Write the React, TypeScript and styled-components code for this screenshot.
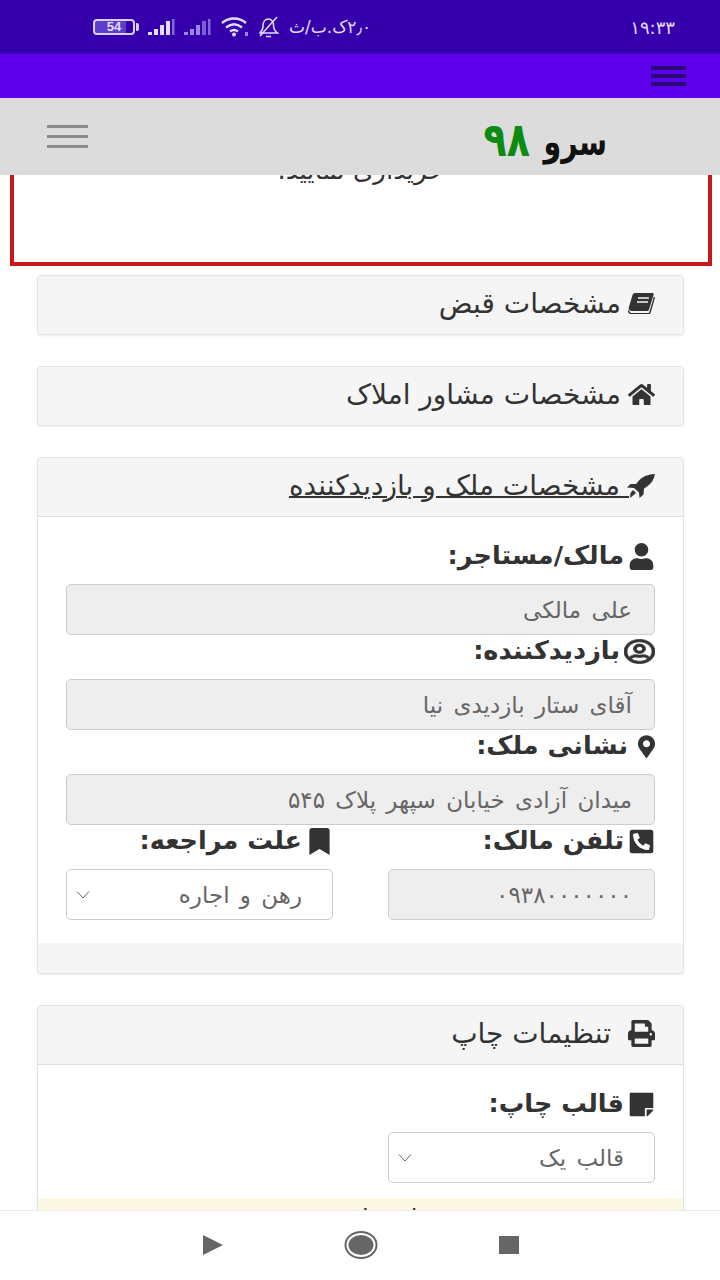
import styled, { createGlobalStyle } from "styled-components";
import {
  FaBookmark,
  FaHome,
  FaMapMarkerAlt,
  FaPhoneSquareAlt,
  FaPrint,
  FaRegUserCircle,
  FaStickyNote,
  FaUser,
} from "react-icons/fa";
import type { ReactNode } from "react";

const GlobalStyle = createGlobalStyle`
  html, body {
    margin: 0;
    padding: 0;
    background: #fff;
  }
  * {
    box-sizing: border-box;
  }
`;

const font = `"DejaVu Sans", "Noto Sans", sans-serif`;

const Screen = styled.div`
  width: 720px;
  height: 1280px;
  display: flex;
  flex-direction: column;
  overflow: hidden;
  font-family: ${font};
  color: #333;
  background: #fff;
`;

const StatusBar = styled.div`
  height: 54px;
  flex: none;
  background: #3500ac;
  color: #e4dcfa;
  display: flex;
  align-items: center;
  justify-content: space-between;
  padding: 0 45px 0 93px;
  direction: ltr;
`;

const StatusLeft = styled.div`
  display: flex;
  align-items: center;
  gap: 10px;
`;

const Signals = styled.div`
  display: flex;
  align-items: center;
  gap: 9px;
`;

const Battery = styled.div`
  width: 42px;
  height: 16px;
  margin-right: 3px;
  border: 2px solid #d9cef8;
  border-radius: 4px;
  font: bold 13px "Liberation Sans", sans-serif;
  line-height: 12px;
  text-align: center;
  background: linear-gradient(90deg, #5b3fc9 82%, transparent 82%);
  position: relative;
  &::after {
    content: "";
    position: absolute;
    right: -6px;
    top: 2px;
    width: 3px;
    height: 8px;
    border-radius: 0 2px 2px 0;
    background: #d9cef8;
  }
`;

const StatusText = styled.span`
  font-size: 17px;
  white-space: nowrap;
`;

const Clock = styled.span`
  font-size: 18px;
  white-space: nowrap;
`;

const AppBar = styled.div`
  height: 44px;
  flex: none;
  background: #5f00eb;
  display: flex;
  align-items: center;
  justify-content: flex-end;
  padding: 0 34px 0 0;
`;

const Burger = styled.div<{ $w: number; $h: number; $c: string; $gap: number }>`
  width: ${(p) => p.$w}px;
  display: flex;
  flex-direction: column;
  gap: ${(p) => p.$gap}px;
  & > i {
    display: block;
    height: ${(p) => p.$h}px;
    background: ${(p) => p.$c};
  }
`;

const NavBar = styled.div`
  height: 77px;
  flex: none;
  background: #dcdcdc;
  display: flex;
  align-items: center;
  justify-content: space-between;
  padding: 0 113px 0 47px;
  direction: ltr;
  position: relative;
  z-index: 2;
`;

const Logo = styled.div`
  display: flex;
  align-items: center;
  direction: rtl;
  gap: 15px;
  font-weight: bold;
  white-space: nowrap;
`;

const LogoName = styled.span`
  display: inline-block;
  width: 62px;
  font-size: 38px;
  line-height: 50px;
  color: #111;
  transform: translateY(5px) scaleX(0.75);
  transform-origin: right center;
`;

const LogoNumber = styled.span`
  display: inline-block;
  width: 45px;
  font-size: 38px;
  line-height: 50px;
  color: #0c8a12;
  transform: translateY(3px) scaleY(1.25);
`;

const Content = styled.div`
  flex: 1;
  min-height: 0;
  overflow: hidden;
  direction: rtl;
`;

const Alert = styled.div`
  height: 91px;
  margin: 0 8px 9px 10px;
  border: 4px solid #c8161b;
  border-top: none;
  text-align: center;
  overflow: hidden;
  font-size: 26px;
  & > p {
    margin: -20px 0 0;
    line-height: 30px;
  }
`;

const Panels = styled.div`
  padding: 0 36px 0 37px;
  display: flex;
  flex-direction: column;
  gap: 31px;
`;

const Panel = styled.section`
  background: #fff;
  border: 1px solid #e2e2e2;
  border-radius: 4px;
  box-shadow: 0 1px 2px rgba(0, 0, 0, 0.08);
  overflow: hidden;
`;

const PanelHead = styled.div<{ $open?: boolean }>`
  height: ${(p) => (p.$open ? 59 : 58)}px;
  background: #f5f5f5;
  display: flex;
  align-items: center;
  padding: 0 28px 3px 0;
  gap: 7px;
  font-size: 28px;
  color: #333;
  white-space: nowrap;
  border-bottom: ${(p) => (p.$open ? "1px solid #ddd" : "none")};
  & > svg {
    font-size: 27px;
    flex: none;
  }
`;

const Underlined = styled.span`
  text-decoration: underline;
  text-decoration-thickness: 2px;
  margin-right: -9px;
`;

const PrintTitle = styled.span`
  margin-right: 10px;
`;

const PanelBody = styled.div`
  padding: 23px 28px 0;
`;

const Label = styled.div`
  height: 44px;
  padding-bottom: 12px;
  display: flex;
  align-items: center;
  gap: 4px;
  font-size: 25.5px;
  line-height: 1;
  font-weight: bold;
  color: #333;
  white-space: nowrap;
  & > svg {
    font-size: 27px;
    flex: none;
  }
`;

const MarkerIcon = styled(FaMapMarkerAlt)`
  && {
    width: 17px;
    height: 23px;
    margin-left: 6px;
  }
`;

const VisitorIcon = styled(FaRegUserCircle)`
  && {
    width: 31px;
    height: 25px;
    stroke: #333;
    stroke-width: 14px;
  }
`;

const Readonly = styled.div`
  height: 51px;
  background: #eee;
  border: 1px solid #ccc;
  border-radius: 5px;
  display: flex;
  align-items: center;
  padding: 0 22px;
  font-size: 23px;
  word-spacing: 3px;
  color: #666;
  white-space: nowrap;
`;

const Select = styled.div`
  height: 51px;
  background: #fff;
  border: 1px solid #ccc;
  border-radius: 5px;
  display: flex;
  align-items: center;
  justify-content: space-between;
  padding: 0 30px 0 8px;
  font-size: 23px;
  word-spacing: 3px;
  color: #666;
  white-space: nowrap;
`;

const Pair = styled.div`
  display: grid;
  grid-template-columns: 267px 267px;
  justify-content: space-between;
`;

const Field = styled.div`
  display: flex;
  flex-direction: column;
`;

const PanelFoot = styled.div`
  height: 30px;
  margin-top: 23px;
  background: #f5f5f5;
`;

const Warning = styled.div`
  height: 40px;
  margin-top: 15px;
  background: #fcf8e3;
  text-align: center;
  font-size: 24px;
  line-height: 40px;
`;

const BottomNav = styled.div`
  height: 70px;
  flex: none;
  background: #fff;
  border-top: 1px solid #ececec;
  display: flex;
  align-items: center;
  justify-content: center;
  gap: 120px;
  padding: 0 0 2px 2px;
  position: relative;
`;

const Chevron = () => (
  <svg width="16" height="10" viewBox="0 0 16 10" fill="none" stroke="#666" strokeWidth="1">
    <path d="M2 1.5 L8 8 L14 1.5" />
  </svg>
);

const BookIcon = () => (
  <svg width="27" height="21" viewBox="0 0 27 21" fill="#333">
    <path d="M7 0h17.500c1 0 1.500.7 1.200 1.600L21 16.500c-.3 1-1 1.500-2 1.500H4c-2.500 0-3.800-1.300-3.200-3.500L4.500 2C4.900.7 5.800 0 7 0z" />
    <path d="M10 5h11M9 9h11" stroke="#f5f5f5" strokeWidth="1.600" />
    <path d="M26.500 4 22 19.500c-.2.800-.8 1.200-1.500 1.200H4c-2 0-3.500-1.500-3.500-3.500" fill="none" stroke="#333" strokeWidth="1.400" />
  </svg>
);

const RocketIcon = () => (
  <svg width="28" height="24" viewBox="0 0 28 24" fill="#333">
    <path d="M28 0c-7 .3-12 2.500-16 6.500L9 10H3.500L0 13.500l7 .5 5 4.500.5 5.500 4-3.500.5-6 3-2C24.500 9.500 27 5.500 28 0z" />
    <path d="M6 16l3 3-6 5 .5-5z" />
  </svg>
);

const Bars = ({ dim }: { dim?: boolean }) => (
  <svg width="27" height="16" viewBox="0 0 27 16" fill={dim ? "#9b86e6" : "#e4dcfa"}>
    <rect x="0" y="13" width="4" height="3" />
    <rect x="6" y="10" width="4" height="6" />
    <rect x="12" y="6" width="4" height="10" />
    <rect x="18" y="2" width="4" height="14" opacity={dim ? 0.7 : 1} />
    <rect x="24" y="0" width="2.500" height="16" fill="#7f67d8" />
  </svg>
);

const Wifi = () => (
  <svg width="28" height="20" viewBox="0 0 28 20" fill="none" stroke="#e4dcfa" strokeWidth="2.400">
    <path d="M1 6c7-6 17-6 24 0M5 10.500c5-4 11-4 16 0M9 14.500c2.500-2 5.500-2 8 0" />
    <circle cx="13" cy="17.500" r="2" fill="#e4dcfa" stroke="none" />
    <rect x="24" y="15" width="3" height="4" fill="#9b86e6" stroke="none" />
  </svg>
);

const BellOff = () => (
  <svg width="20" height="22" viewBox="0 0 20 22" fill="none" stroke="#e4dcfa" strokeWidth="1.500">
    <path d="M1 17c2-2 3-3 3-7 0-4 2-7 5.500-7 3 0 5 3 5 6 0 4 1 6 4 8z" />
    <path d="M7 20.500h5M18 1 1 20" />
  </svg>
);

const Row = ({ icon, children }: { icon: ReactNode; children: ReactNode }) => (
  <Label>
    {icon}
    <span>{children}</span>
  </Label>
);

export default function App() {
  return (
    <Screen>
      <GlobalStyle />
      <StatusBar>
        <StatusLeft>
          <Battery>54</Battery>
          <Signals>
            <Bars />
            <Bars dim />
          </Signals>
          <Wifi />
          <BellOff />
          <StatusText dir="rtl">۲٫۰ک.ب/ث</StatusText>
        </StatusLeft>
        <Clock>۱۹:۳۳</Clock>
      </StatusBar>
      <AppBar>
        <Burger $w={35} $h={4} $c="#2a0a78" $gap={4}>
          <i />
          <i />
          <i />
        </Burger>
      </AppBar>
      <NavBar>
        <Burger $w={41} $h={3} $c="#8a8a8a" $gap={7}>
          <i />
          <i />
          <i />
        </Burger>
        <Logo>
          <LogoName>سرو</LogoName>
          <LogoNumber>۹۸</LogoNumber>
        </Logo>
      </NavBar>
      <Content>
        <Alert>
          <p>خریداری نمایید.</p>
        </Alert>
        <Panels>
          <Panel>
            <PanelHead>
              <BookIcon />
              <span>مشخصات قبض</span>
            </PanelHead>
          </Panel>
          <Panel>
            <PanelHead>
              <FaHome />
              <span>مشخصات مشاور املاک</span>
            </PanelHead>
          </Panel>
          <Panel>
            <PanelHead $open>
              <RocketIcon />
              <Underlined>&nbsp;مشخصات ملک و بازدیدکننده</Underlined>
            </PanelHead>
            <PanelBody>
              <Field>
                <Row icon={<FaUser />}>مالک/مستاجر:</Row>
                <Readonly>علی مالکی</Readonly>
              </Field>
              <Field>
                <Row icon={<VisitorIcon preserveAspectRatio="none" />}>بازدیدکننده:</Row>
                <Readonly>آقای ستار بازدیدی نیا</Readonly>
              </Field>
              <Field>
                <Row icon={<MarkerIcon />}>نشانی ملک:</Row>
                <Readonly>میدان آزادی خیابان سپهر پلاک ۵۴۵</Readonly>
              </Field>
              <Pair>
                <Field>
                  <Row icon={<FaPhoneSquareAlt />}>تلفن مالک:</Row>
                  <Readonly>۰۹۳۸۰۰۰۰۰۰۰</Readonly>
                </Field>
                <Field>
                  <Row icon={<FaBookmark />}>علت مراجعه:</Row>
                  <Select>
                    <span>رهن و اجاره</span>
                    <Chevron />
                  </Select>
                </Field>
              </Pair>
            </PanelBody>
            <PanelFoot />
          </Panel>
          <Panel>
            <PanelHead $open>
              <FaPrint />
              <PrintTitle>تنظیمات چاپ</PrintTitle>
            </PanelHead>
            <PanelBody>
              <Pair>
                <Field>
                  <Row icon={<FaStickyNote />}>قالب چاپ:</Row>
                  <Select>
                    <span>قالب یک</span>
                    <Chevron />
                  </Select>
                </Field>
              </Pair>
            </PanelBody>
            <Warning>برای چاپ قبض</Warning>
          </Panel>
        </Panels>
      </Content>
      <BottomNav>
        <svg width="22" height="20" viewBox="0 0 22 20" fill="#666">
          <path d="M1 0 21 10 1 20z" />
        </svg>
        <svg width="34" height="28" viewBox="0 0 34 28" fill="#666">
          <ellipse cx="17" cy="14" rx="12.500" ry="10" />
          <ellipse cx="17" cy="14" rx="15.500" ry="13" fill="none" stroke="#666" strokeWidth="2" />
        </svg>
        <svg width="22" height="20" viewBox="0 0 22 20" fill="#666">
          <rect x="1" y="1" width="20" height="18" />
        </svg>
      </BottomNav>
    </Screen>
  );
}
